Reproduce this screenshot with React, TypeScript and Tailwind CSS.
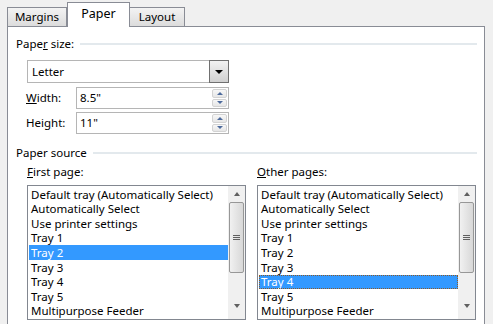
const items = [
  "Default tray (Automatically Select)",
  "Automatically Select",
  "Use printer settings",
  "Tray 1",
  "Tray 2",
  "Tray 3",
  "Tray 4",
  "Tray 5",
  "Multipurpose Feeder",
];

function GroupHeader({ children }: { children: React.ReactNode }) {
  return (
    <div className="flex h-[14px] items-center gap-[6px] leading-[14px]">
      <span className="whitespace-nowrap">{children}</span>
      <div className="h-[2px] flex-1 bg-[#e3e9ed]" />
    </div>
  );
}

function Spinner() {
  return (
    <div className="flex h-full w-[15px] flex-col gap-px py-px">
      <div className="flex flex-1 items-center justify-center rounded-[2px] border border-[#d3d3d3] bg-gradient-to-b from-[#f7f7f7] to-[#e6e6e6]">
        <div className="h-0 w-0 border-x-[3px] border-b-[3px] border-x-transparent border-b-[#4d6a9c]" />
      </div>
      <div className="flex flex-1 items-center justify-center rounded-[2px] border border-[#d3d3d3] bg-gradient-to-b from-[#f7f7f7] to-[#e6e6e6]">
        <div className="h-0 w-0 border-x-[3px] border-t-[3px] border-x-transparent border-t-[#4d6a9c]" />
      </div>
    </div>
  );
}

function ListBox({ selected, focused }: { selected: number; focused?: boolean }) {
  return (
    <div className="flex h-[135px] border border-[#828790] bg-white">
      <div className="flex-1 pt-px pl-[1px]">
        {items.map((t, i) => (
          <div
            key={t}
            className={
              "flex h-[14.6px] items-center whitespace-nowrap pl-[2px] leading-none " +
              (i === selected ? "bg-[#3399ff] text-white " : "") +
              (i === selected && focused ? "outline outline-1 outline-dotted outline-[#8a5a2a] -outline-offset-1" : "")
            }
          >
            {t}
          </div>
        ))}
      </div>
      <div className="flex w-[17px] flex-col bg-[#f0f0f0]">
        <div className="flex h-[16px] items-center justify-center">
          <div className="h-0 w-0 border-x-[3.5px] border-b-[4px] border-x-transparent border-b-[#606060]" />
        </div>
        <div className="mx-px flex h-[71px] items-center justify-center rounded-[2px] border border-[#979797] bg-gradient-to-r from-[#f1f1f1] to-[#d8d8d8]">
          <div className="flex flex-col gap-px">
            <div className="h-px w-[7px] bg-[#606060]" />
            <div className="h-px w-[7px] bg-[#606060]" />
            <div className="h-px w-[7px] bg-[#606060]" />
          </div>
        </div>
        <div className="flex-1" />
        <div className="flex h-[16px] items-center justify-center">
          <div className="h-0 w-0 border-x-[3.5px] border-t-[4px] border-x-transparent border-t-[#606060]" />
        </div>
        <div className="h-[5px]" />
      </div>
    </div>
  );
}

export default function App() {
  return (
    <div
      className="h-[324px] w-[493px] overflow-hidden bg-[#f0f0f0] text-[11.5px] text-black"
      style={{ fontFamily: '"Noto Sans", "Liberation Sans", sans-serif' }}
    >
      {/* Tabs */}
      <div className="flex h-[26px] items-end pl-[7px]">
        <div className="flex h-[19px] w-[60px] items-center justify-center border border-b-0 border-[#898c95] bg-gradient-to-b from-[#f3f3f3] to-[#dcdcdc] leading-none">
          Margins
        </div>
        <div className="relative z-10 -mb-px flex h-[25px] w-[63px] items-center justify-center border border-b-0 border-[#898c95] bg-white pb-[2px] text-[12.5px] leading-none">
          Paper
        </div>
        <div className="flex h-[19px] w-[55px] items-center justify-center border border-b-0 border-l-0 border-[#898c95] bg-gradient-to-b from-[#f3f3f3] to-[#dcdcdc] leading-none">
          Layout
        </div>
      </div>

      {/* Panel */}
      <div className="ml-[7px] h-[320px] w-[478px] border border-[#898c95] bg-white pt-[10px] pr-[7px] pl-[8px]">
        <GroupHeader>
          Pape<span className="underline">r</span> size:
        </GroupHeader>

        <div className="mt-[9px] ml-[11px] flex h-[23px] w-[202px] items-center border border-[#b5b5b5] pl-[4px] leading-none">
          <span className="flex-1">Letter</span>
          <div className="-mr-px flex h-[23px] w-[20px] items-center justify-center border border-[#707070] bg-gradient-to-b from-[#f2f2f2] to-[#d0d0d0]">
            <div className="h-0 w-0 border-x-[4px] border-t-[4px] border-x-transparent border-t-black" />
          </div>
        </div>

        <div className="mt-[4px] ml-[10px] flex h-[22px] items-center leading-none">
          <span className="w-[50px]">
            <span className="underline">W</span>idth:
          </span>
          <div className="flex h-[22px] w-[153px] items-center border border-[#b5b5b5] pr-px pl-[3px]">
            <span className="flex-1">8.5"</span>
            <Spinner />
          </div>
        </div>

        <div className="mt-[3px] ml-[10px] flex h-[22px] items-center leading-none">
          <span className="w-[50px]">
            Hei<span className="underline">g</span>ht:
          </span>
          <div className="flex h-[22px] w-[153px] items-center border border-[#b5b5b5] pr-px pl-[3px]">
            <span className="flex-1">11"</span>
            <Spinner />
          </div>
        </div>

        <div className="mt-[12px]">
          <GroupHeader>Paper source</GroupHeader>
        </div>

        <div className="mt-[5px] ml-[11px] grid grid-cols-[219px_219px] gap-x-[11px]">
          <div>
            <div className="h-[14px] leading-[14px]">
              <span className="underline">F</span>irst page:
            </div>
            <div className="mt-[6px]">
              <ListBox selected={4} />
            </div>
          </div>
          <div>
            <div className="h-[14px] leading-[14px]">
              <span className="underline">O</span>ther pages:
            </div>
            <div className="mt-[6px]">
              <ListBox selected={6} focused />
            </div>
          </div>
        </div>
      </div>
    </div>
  );
}
